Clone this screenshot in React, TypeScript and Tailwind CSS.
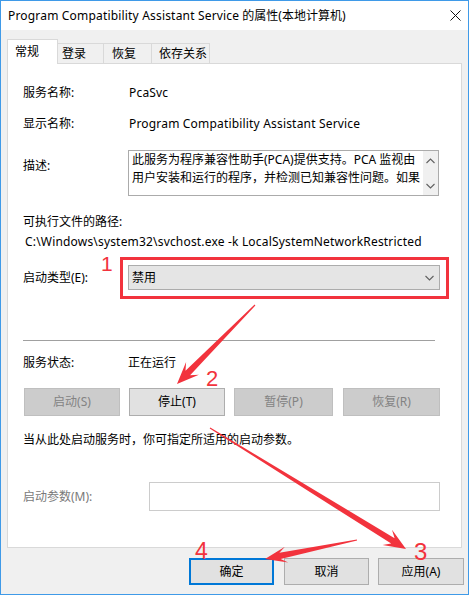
import React from "react";

function arrowPts(tx: number, ty: number, px: number, py: number, hl = 22, hw = 9, nw = 3.2, tw = 0.6) {
  const dx = px - tx, dy = py - ty;
  const L = Math.hypot(dx, dy);
  const ux = dx / L, uy = dy / L;
  const nx = -uy, ny = ux;
  const bx = px - ux * hl, by = py - uy * hl;
  const kx = px - ux * hl * 0.7, ky = py - uy * hl * 0.7;
  const pts = [
    [tx + nx * tw, ty + ny * tw],
    [kx + nx * nw, ky + ny * nw],
    [bx + nx * hw, by + ny * hw],
    [px, py],
    [bx - nx * hw, by - ny * hw],
    [kx - nx * nw, ky - ny * nw],
    [tx - nx * tw, ty - ny * tw],
  ];
  return pts.map((p) => `${p[0].toFixed(1)},${p[1].toFixed(1)}`).join(" ");
}

function Chevron({ up, className }: { up?: boolean; className?: string }) {
  return (
    <svg width="9" height="6" viewBox="0 0 9 6" className={className}>
      <polyline
        points={up ? "0.5,5 4.5,1 8.5,5" : "0.5,1 4.5,5 8.5,1"}
        fill="none"
        stroke="#606060"
        strokeWidth="1.1"
      />
    </svg>
  );
}

export default function App() {
  return (
    <div className="relative w-[469px] h-[595px] border border-[#3f9ae8] bg-[#f0f0f0] flex flex-col font-['Noto_Sans','Noto_Sans_CJK_SC',sans-serif] text-[12px] leading-[18px] text-black overflow-hidden">
      {/* Title bar */}
      <div className="h-[29px] shrink-0 bg-white flex items-center justify-between pl-[7px] pr-[7px]">
        <span className="whitespace-nowrap">
          <span className="tracking-[0.18px]">Program Compatibility Assistant Service</span> 的属性(本地计算机)
        </span>
        <svg width="11" height="11" viewBox="0 0 11 11" className="mt-[-1px]">
          <line x1="0.5" y1="0.5" x2="10.5" y2="10.5" stroke="#111" strokeWidth="1" />
          <line x1="10.5" y1="0.5" x2="0.5" y2="10.5" stroke="#111" strokeWidth="1" />
        </svg>
      </div>

      {/* Body */}
      <div className="flex-1 flex flex-col pt-[9px] pl-[6px] pr-[6px]">
        {/* Tabs */}
        <div className="h-[25px] flex items-end shrink-0">
          <div className="relative z-10 h-[25px] w-[51px] bg-white border-l border-t border-r border-[#d9d9d9] pl-[7px] pt-[3px]">
            常规
          </div>
          <div className="h-[21px] w-[47px] -ml-px border-t border-r border-[#d9d9d9] bg-[#f0f0f0] flex items-center pl-[5px]">
            登录
          </div>
          <div className="h-[21px] w-[48px] border-t border-r border-[#d9d9d9] bg-[#f0f0f0] flex items-center pl-[8px]">
            恢复
          </div>
          <div className="h-[21px] w-[58px] border-t border-r border-[#d9d9d9] bg-[#f0f0f0] flex items-center pl-[7px]">
            依存关系
          </div>
        </div>

        {/* Panel */}
        <div className="h-[485px] -mt-px border border-[#d9d9d9] bg-white pl-[15px] flex flex-col shrink-0">
          <div className="mt-[20px] h-[18px] flex items-center">
            <span className="w-[106px]">服务名称:</span>
            <span className="tracking-[0.18px]">PcaSvc</span>
          </div>
          <div className="mt-[13px] h-[18px] flex items-center">
            <span className="w-[106px]">显示名称:</span>
            <span className="whitespace-nowrap tracking-[0.18px]">Program Compatibility Assistant Service</span>
          </div>
          <div className="mt-[17px] flex items-start">
            <span className="w-[105px] pt-[7px]">描述:</span>
            <div className="w-[311px] h-[46px] border border-[#ababab] flex overflow-hidden">
              <div className="flex-1 pl-[3px] overflow-hidden whitespace-nowrap">
                <div>此服务为程序兼容性助手(PCA)提供支持。PCA 监视由</div>
                <div>用户安装和运行的程序，并检测已知兼容性问题。如果</div>
              </div>
              <div className="w-[15px] bg-[#f0f0f0] flex flex-col items-center justify-between pt-[7px] pb-[6px]">
                <Chevron up />
                <Chevron />
              </div>
            </div>
          </div>
          <div className="mt-[17px] h-[18px] flex items-center">可执行文件的路径:</div>
          <div className="mt-[2px] h-[18px] flex items-center ml-[2px] whitespace-nowrap tracking-[0.18px]">
            C:\Windows\system32\svchost.exe -k LocalSystemNetworkRestricted
          </div>
          <div className="mt-[14px] h-[25px] flex items-center">
            <span className="w-[105px]">启动类型(E):</span>
            <div className="relative w-[312px] h-[25px] bg-[#e5e5e5] border border-[#acacac] flex items-center justify-between pl-[3px] pr-[5px]">
              <span>禁用</span>
              <Chevron />
              <div className="absolute left-[-9px] top-[-9px] right-[-10px] bottom-[-10px] border-[3px] border-[#f2333d]" />
            </div>
          </div>
          <div className="mt-[50px] h-px w-[412px] bg-[#a0a0a0]" />
          <div className="mt-[13px] h-[18px] flex items-center">
            <span className="w-[105px]">服务状态:</span>
            <span>正在运行</span>
          </div>
          <div className="mt-[16px] h-[28px] flex ml-[1px]">
            <div className="w-[96px] h-[28px] bg-[#cccccc] border border-[#bfbfbf] text-[#838383] flex items-center justify-center">启动(S)</div>
            <div className="ml-[9px] w-[96px] h-[28px] bg-[#e1e1e1] border border-[#adadad] flex items-center justify-center">停止(T)</div>
            <div className="ml-[9px] w-[99px] h-[28px] bg-[#cccccc] border border-[#bfbfbf] text-[#838383] flex items-center justify-center">暂停(P)</div>
            <div className="ml-[10px] w-[97px] h-[28px] bg-[#cccccc] border border-[#bfbfbf] text-[#838383] flex items-center justify-center">恢复(R)</div>
          </div>
          <div className="mt-[15px] h-[18px] flex items-center">当从此处启动服务时，你可指定所适用的启动参数。</div>
          <div className="mt-[33px] h-[29px] flex items-center">
            <span className="w-[126px] text-[#7a7a7a]">启动参数(M):</span>
            <div className="w-[291px] h-[29px] border border-[#cccccc] bg-white" />
          </div>
        </div>

        {/* Bottom buttons */}
        <div className="mt-[10px] h-[27px] flex justify-end -mr-[2px]">
          <div className="w-[85px] h-[27px] bg-[#e1e1e1] border-2 border-[#0078d7] flex items-center justify-center">确定</div>
          <div className="ml-[10px] w-[85px] h-[27px] bg-[#e1e1e1] border border-[#adadad] flex items-center justify-center">取消</div>
          <div className="ml-[9px] w-[86px] h-[27px] bg-[#e1e1e1] border border-[#adadad] flex items-center justify-center">应用(A)</div>
        </div>
      </div>

      {/* Annotation overlay */}
      <svg className="absolute left-[-1px] top-[-1px] pointer-events-none" width="469" height="595" viewBox="0 0 469 595">
        <polygon points={arrowPts(255, 305, 177, 384, 22, 9, 3.2, 0.6)} fill="#f2333d" />
        <polygon points={arrowPts(210, 428, 406, 549, 22, 9, 3.2, 0.6)} fill="#f2333d" />
        <polygon points={arrowPts(357, 540, 265, 559, 22, 8, 3.2, 0.6)} fill="#f2333d" />
      </svg>
      <span className="absolute left-[100px] top-[251px] font-['Liberation_Sans',sans-serif] text-[21px] leading-[24px] text-[#f2333d]">1</span>
      <span className="absolute left-[205px] top-[366px] font-['Liberation_Sans',sans-serif] text-[22px] leading-[24px] text-[#f2333d]">2</span>
      <span className="absolute left-[413px] top-[538px] font-['Liberation_Sans',sans-serif] text-[24px] leading-[26px] text-[#f2333d]">3</span>
      <span className="absolute left-[194px] top-[537px] font-['Liberation_Sans',sans-serif] text-[23px] leading-[26px] text-[#f2333d]">4</span>
    </div>
  );
}
